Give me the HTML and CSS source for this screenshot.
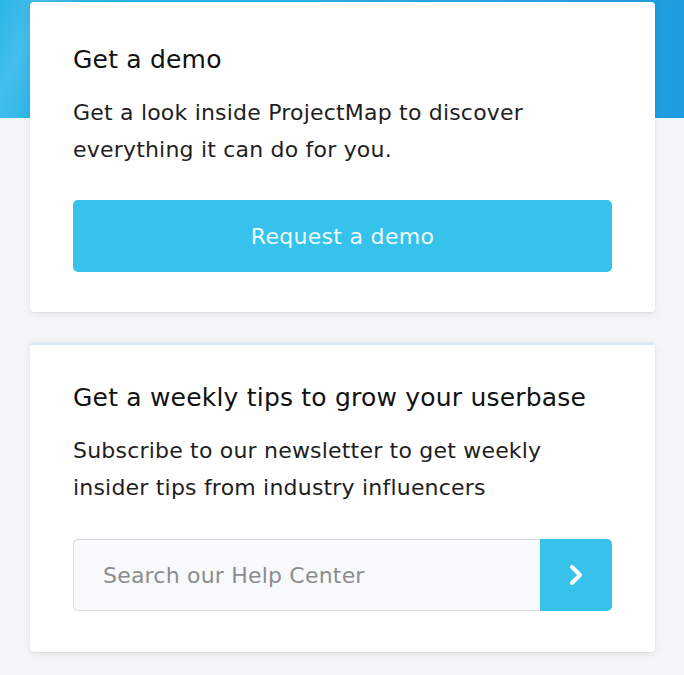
FILE: index.html
```html
<!DOCTYPE html>
<html>
<head>
    <title>ProjectMap - Get a demo</title>
    <link rel="stylesheet" href="styles.css">
</head>
<body>
    <div class="hero"></div>

    <div class="cards">
        <section class="card">
            <h2>Get a demo</h2>
            <p>Get a look inside ProjectMap to discover everything it can do for you.</p>
            <button type="button" class="btn">Request a demo</button>
        </section>

        <section class="card card-accent">
            <h2>Get a weekly tips to grow your userbase</h2>
            <p>Subscribe to our newsletter to get weekly insider tips from industry influencers</p>
            <form class="subscribe">
                <input type="text" placeholder="Search our Help Center">
                <button type="button" class="go">
                    <svg width="18" height="26" viewBox="0 0 18 26"><path d="M5 5 L13 13 L5 21" fill="none" stroke="#fff" stroke-width="4" stroke-linecap="round" stroke-linejoin="round"/></svg>
                </button>
            </form>
        </section>
    </div>
</body>
</html>
```

FILE: styles.css
```css
body {
    margin: 0;
    font-family: "DejaVu Sans", "Open Sans", sans-serif;
    color: #1c1c1c;
    background: #f5f6f8;
}

.hero {
    height: 118px;
    background:
        linear-gradient(115deg, rgba(255, 255, 255, 0) 0%, rgba(255, 255, 255, 0.12) 6%, rgba(255, 255, 255, 0) 12%),
        linear-gradient(90deg, #2bb6e8 0%, #2aaee6 50%, #1e9de0 100%);
}

.cards {
    margin-top: -116px;
    padding: 0 29px 24px 30px;
    display: flex;
    flex-direction: column;
    gap: 30px;
}

.card {
    background: #fff;
    border-radius: 4px;
    box-shadow: 0 2px 10px rgba(0, 0, 0, 0.08), 0 1px 2px rgba(0, 0, 0, 0.06);
    padding: 42px 43px 40px 43px;
}

.card-accent {
    border-top: 3px solid #d6ebf5;
    padding-top: 37px;
    padding-bottom: 41px;
}

.card-accent p {
    margin-bottom: 33px;
}

h2 {
    font-size: 25px;
    font-weight: 400;
    line-height: 32px;
    letter-spacing: 0.2px;
    margin: 0 0 18px;
    color: #111;
}

p {
    font-size: 22px;
    line-height: 37px;
    letter-spacing: 0.2px;
    margin: 0 0 32px;
    color: #1e1e1e;
}

.btn {
    display: block;
    width: 100%;
    height: 72px;
    border: none;
    border-radius: 5px;
    background: #36c2ea;
    color: #eefaff;
    font-family: inherit;
    font-size: 22px;
    letter-spacing: 0.3px;
    cursor: pointer;
}

.subscribe {
    display: flex;
    height: 72px;
}

.subscribe input {
    flex: 1;
    min-width: 0;
    border: 1px solid #d9dcdf;
    border-right: none;
    border-radius: 5px 0 0 5px;
    background: #f8f9fa;
    padding: 0 29px;
    font-family: inherit;
    font-size: 22px;
    letter-spacing: 0.2px;
    color: #333;
}

.subscribe input::placeholder {
    color: #8a8d90;
}

.go {
    width: 72px;
    border: none;
    border-radius: 0 5px 5px 0;
    background: #36c2ea;
    display: flex;
    align-items: center;
    justify-content: center;
    cursor: pointer;
}
```
